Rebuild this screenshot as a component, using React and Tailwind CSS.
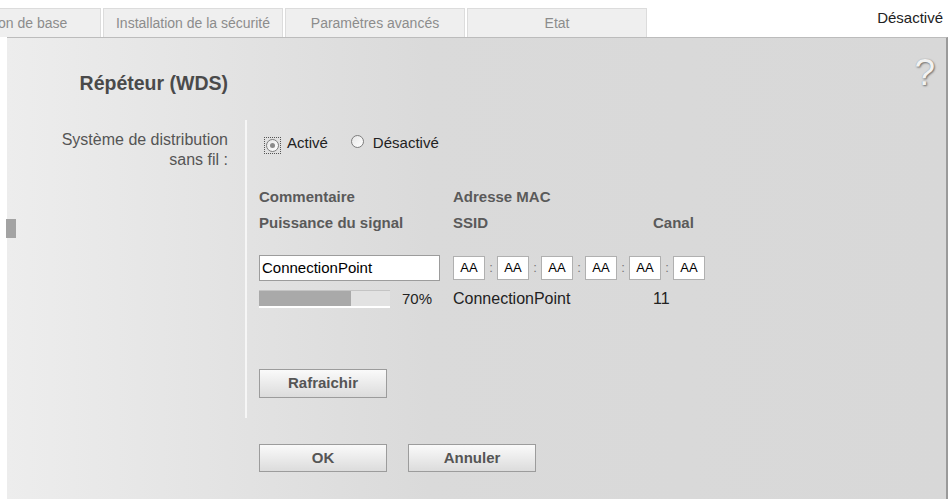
import React from 'react';

const TABS = ['Installation de base', 'Installation de la sécurité', 'Paramètres avancés', 'Etat'];

const Radio = ({ checked, focused }) => (
  <span className={focused ? 'inline-flex p-[1px] outline-1 outline-dotted outline-[#555]' : 'inline-flex p-[1px]'}>
    <span className="w-[13px] h-[13px] rounded-full border border-[#7d7d7d] bg-gradient-to-br from-[#e6e6e6] to-white flex items-center justify-center">
      {checked && <span className="w-[5px] h-[5px] rounded-full bg-[#8a8a8a]" />}
    </span>
  </span>
);

const Button = ({ children, className = '' }) => (
  <button className={`w-[128px] border border-[#9c9c9c] bg-gradient-to-b from-[#fafafa] to-[#dcdcdc] text-[15px] font-bold text-[#555] ${className}`}>
    {children}
  </button>
);

export default function App() {
  return (
    <div className="relative w-[951px] h-[501px] overflow-hidden bg-white font-['Liberation_Sans',Arial,sans-serif]">
      {/* onglets */}
      <div className="flex h-[37px] items-end">
        <div className="flex gap-[2px] ml-[-79px]">
          {TABS.map((t, i) => (
            <div key={t} className="w-[180px] h-[29px] flex items-center justify-center bg-[#efefef] border border-b-0 border-[#dcdcdc] text-[14px] text-[#8c8c8c]">
              <span className={i === 0 ? 'ml-[-8px]' : ''}>{t}</span>
            </div>
          ))}
        </div>
        <div className="ml-auto self-start mt-[7px] mr-[8px] text-[15px] text-[#222]">Désactivé</div>
      </div>

      {/* panneau */}
      <div className="ml-[7px] mr-[3px] h-[462px] border-t border-[#bcbcbc] border-r-2 border-r-[#9a9a9a] bg-gradient-to-r from-[#ededed] via-[#dadada] via-45% to-[#d8d8d8]">
        <div className="flex items-start pt-[15px]">
          <div className="w-[221px] mt-[19px] text-right text-[19.5px] leading-[22px] font-bold text-[#4a4a4a]">Répéteur (WDS)</div>
          <div className="ml-auto mr-[11px] mt-[1px] text-[37px] leading-none text-[#f2f2f2] [text-shadow:1px_1px_2px_#6f6f6f,0_0_1px_#999]">?</div>
        </div>

        <div className="flex mt-[26px]">
          <div className="w-[221px] pt-[10px] text-right text-[16px] leading-[20px] text-[#555]">
            Système de distribution<br />sans fil :
          </div>
          <div className="ml-[17px] w-[2px] bg-[#f6f6f6]" />
          <div className="pl-[12px] pt-[13px] pb-[20px]">
            <div className="flex items-center h-[20px] text-[15px] text-[#222]">
              <span className="ml-[6px]"><Radio checked focused /></span>
              <span className="ml-[7px]">Activé</span>
              <span className="ml-[22px]"><Radio /></span>
              <span className="ml-[8px]">Désactivé</span>
            </div>

            <div className="mt-[35px] text-[15px] leading-[18px] font-bold text-[#5a5a5a]">
              <div className="flex">
                <div className="w-[194px]">Commentaire</div>
                <div>Adresse MAC</div>
              </div>
              <div className="flex mt-[8px]">
                <div className="w-[194px]">Puissance du signal</div>
                <div className="w-[200px]">SSID</div>
                <div>Canal</div>
              </div>
            </div>

            <div className="flex mt-[23px] items-center">
              <div className="w-[194px]">
                <div className="w-[181px] h-[26px] bg-white border border-[#9c9c9c] pl-[2px] flex items-center text-[15px] text-black">ConnectionPoint</div>
              </div>
              <div className="flex items-center">
                {[0, 1, 2, 3, 4, 5].map(i => (
                  <React.Fragment key={i}>
                    {i > 0 && <span className="w-[12px] text-center text-[13px] text-[#777]">:</span>}
                    <span className="w-[32px] h-[24px] bg-white border border-[#b0b0b0] flex items-center justify-center text-[13px] text-black">AA</span>
                  </React.Fragment>
                ))}
              </div>
            </div>

            <div className="flex mt-[9px] items-center h-[18px] text-[15px] text-[#222]">
              <div className="w-[194px] flex items-center">
                <div className="w-[131px] h-[18px] bg-[#e2e2e2] border-t border-[#c4c4c4] border-b-2 border-b-white flex">
                  <div className="w-[70%] bg-[#a9a9a9]" />
                </div>
                <span className="ml-[12px]">70%</span>
              </div>
              <div className="w-[200px] text-[16px]">ConnectionPoint</div>
              <div className="text-[16px]">11</div>
            </div>

            <Button className="mt-[61px] h-[29px]">Rafraichir</Button>
          </div>
        </div>

        <div className="flex gap-[21px] ml-[252px] mt-[26px]">
          <Button className="h-[28px]">OK</Button>
          <Button className="h-[28px]">Annuler</Button>
        </div>
      </div>

      <div className="absolute left-[6px] top-[219px] w-[10px] h-[19px] bg-[#a3a3a3]" />
    </div>
  );
}
